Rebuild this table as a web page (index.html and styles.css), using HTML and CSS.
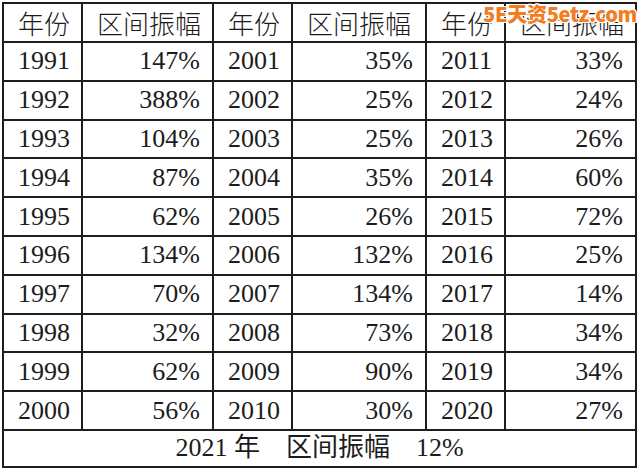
FILE: index.html
```html
<!DOCTYPE html>
<html lang="zh-CN">
<head>
<meta charset="utf-8">
<title>区间振幅</title>
<link rel="stylesheet" href="styles.css">
</head>
<body>
<div class="page">
  <table class="amp">
    <colgroup>
      <col class="c-year"><col class="c-val"><col class="c-year"><col class="c-val2"><col class="c-year"><col class="c-val">
    </colgroup>
    <thead>
      <tr><th>年份</th><th>区间振幅</th><th>年份</th><th>区间振幅</th><th>年份</th><th>区间振幅</th></tr>
    </thead>
    <tbody>
      <tr><td>1991</td><td class="num">147%</td><td>2001</td><td class="num">35%</td><td>2011</td><td class="num">33%</td></tr>
      <tr><td>1992</td><td class="num">388%</td><td>2002</td><td class="num">25%</td><td>2012</td><td class="num">24%</td></tr>
      <tr><td>1993</td><td class="num">104%</td><td>2003</td><td class="num">25%</td><td>2013</td><td class="num">26%</td></tr>
      <tr><td>1994</td><td class="num">87%</td><td>2004</td><td class="num">35%</td><td>2014</td><td class="num">60%</td></tr>
      <tr><td>1995</td><td class="num">62%</td><td>2005</td><td class="num">26%</td><td>2015</td><td class="num">72%</td></tr>
      <tr><td>1996</td><td class="num">134%</td><td>2006</td><td class="num">132%</td><td>2016</td><td class="num">25%</td></tr>
      <tr><td>1997</td><td class="num">70%</td><td>2007</td><td class="num">134%</td><td>2017</td><td class="num">14%</td></tr>
      <tr><td>1998</td><td class="num">32%</td><td>2008</td><td class="num">73%</td><td>2018</td><td class="num">34%</td></tr>
      <tr><td>1999</td><td class="num">62%</td><td>2009</td><td class="num">90%</td><td>2019</td><td class="num">34%</td></tr>
      <tr><td>2000</td><td class="num">56%</td><td>2010</td><td class="num">30%</td><td>2020</td><td class="num">27%</td></tr>
    </tbody>
    <tfoot>
      <tr><td colspan="6" class="total">2021 年　区间振幅　12%</td></tr>
    </tfoot>
  </table>
  <div class="watermark">5E天资5etz.com</div>
</div>
</body>
</html>
```
FILE: styles.css
```css
html, body {
  margin: 0;
  padding: 0;
  background: #ffffff;
}
.page {
  position: relative;
  width: 640px;
  height: 469px;
  padding: 2px 0 0 2px;
  box-sizing: border-box;
}
.amp {
  border-collapse: collapse;
  table-layout: fixed;
  width: 634px;
  font-family: "Liberation Serif", "Times New Roman", "DejaVu Serif", "Noto Sans CJK SC", serif;
  font-size: 26px;
  color: #1c1c1c;
}
.c-year { width: 79px; }
.c-val { width: 131px; }
.c-val2 { width: 134px; }
.amp th, .amp td {
  border: 2px solid #1e1e1e;
  height: 36.8px;
  padding: 0 12px 0 14px;
  vertical-align: middle;
  text-align: left;
  font-weight: normal;
  white-space: nowrap;
  line-height: 1;
}
.amp th {
  font-family: "Noto Sans CJK SC", sans-serif;
  font-weight: 300;
  height: 37px;
}
.amp td.num {
  text-align: right;
}
.amp td.total {
  text-align: center;
  height: 35px;
  padding: 0;
}
.watermark {
  position: absolute;
  top: 1px;
  right: 3px;
  font-family: "Noto Sans CJK SC", sans-serif;
  font-weight: 900;
  font-size: 20px;
  line-height: 26px;
  letter-spacing: -0.3px;
  color: #f47c20;
  text-shadow: 1px 1px 0 #fff, -1px -1px 0 #fff, 1px -1px 0 #fff, -1px 1px 0 #fff, 0 1px 0 #fff, 1px 0 0 #fff, 0 -1px 0 #fff, -1px 0 0 #fff;
}
```
